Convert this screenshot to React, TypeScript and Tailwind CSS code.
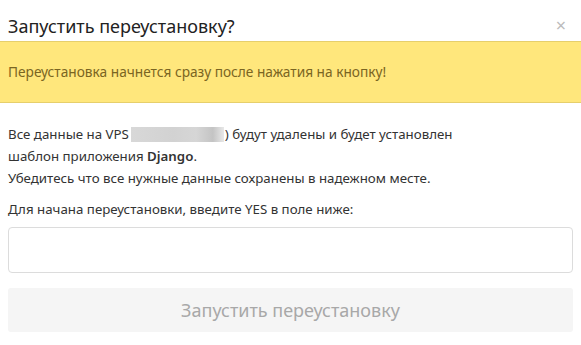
import React from 'react';

export default function App() {
  return (
    <div className="w-[581px] h-[345px] bg-white font-['Noto_Sans',sans-serif] text-[#333]">
      <div className="relative flex h-[41px] items-end px-2 pb-[3px]">
        <h2 className="text-[18px] leading-[24px] text-[#222]">Запустить переустановку?</h2>
        <button className="absolute right-[15px] top-[16px] text-[18px] leading-none text-[#bbb]">×</button>
      </div>
      <div className="flex h-[62px] items-center border-y border-[#e6cf6c] bg-[#ffe77c] px-2 text-[13.7px] text-[#7a6522]">
        Переустановка начнется сразу после нажатия на кнопку!
      </div>
      <div className="px-2 pt-[20px] text-[13.3px] leading-[22px]">
        <p>
          Все данные на VPS
          <span className="ml-[2px] mr-px inline-block h-[15px] w-[93px] align-[-3px] bg-[linear-gradient(90deg,#d8d8d8_0%,#d2d2d2_45%,#d6d6d6_70%,#c4c4c4_88%,#e8e8e8_100%)]" />
          ) будут удалены и будет установлен
          <br />
          шаблон приложения <b className="font-semibold">Django</b>.
          <br />
          Убедитесь что все нужные данные сохранены в надежном месте.
        </p>
        <p className="mt-[9px]">Для начана переустановки, введите YES в поле ниже:</p>
        <input className="mt-[7px] block h-[46px] w-full rounded border border-[#dcdcdc] px-3 outline-none" />
        <button className="mt-[15px] flex h-[44px] w-full items-center justify-center rounded-[3px] bg-[#f5f5f5] text-[18px] text-[#a8a8a8]">
          Запустить переустановку
        </button>
      </div>
    </div>
  );
}
